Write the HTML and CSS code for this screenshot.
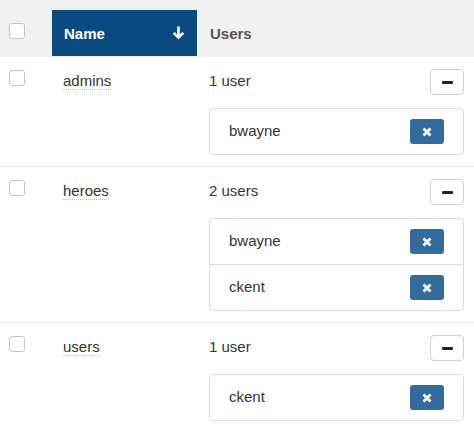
FILE: index.html
```html
<!DOCTYPE html>
<html>
<head>
<meta charset="utf-8">
<link rel="stylesheet" href="styles.css">
</head>
<body>
<div class="table">
  <div class="head">
    <div class="cell-check"><span class="checkbox"></span></div>
    <div class="th-name">
      <span>Name</span>
      <svg class="sort" width="13" height="14" viewBox="0 0 13 14"><path d="M6.5 13.5 L0.8 7.8 L2.6 6 L5.2 8.6 L5.2 0.5 L7.8 0.5 L7.8 8.6 L10.4 6 L12.2 7.8 Z" fill="#fff"/></svg>
    </div>
    <div class="th-users">Users</div>
  </div>

  <div class="row">
    <div class="cell-check"><span class="checkbox"></span></div>
    <div class="cell-name"><span class="editable">admins</span></div>
    <div class="cell-users">
      <div class="users-top">
        <span class="count">1 user</span>
        <button class="btn-collapse"><span class="minus"></span></button>
      </div>
      <ul class="list">
        <li class="item"><span>bwayne</span><button class="btn-del"><svg width="10" height="10" viewBox="0 0 10 10"><path d="M1.5 1.5 L8.5 8.5 M8.5 1.5 L1.5 8.5" stroke="#fff" stroke-width="2.8"/></svg></button></li>
      </ul>
    </div>
  </div>

  <div class="row">
    <div class="cell-check"><span class="checkbox"></span></div>
    <div class="cell-name"><span class="editable">heroes</span></div>
    <div class="cell-users">
      <div class="users-top">
        <span class="count">2 users</span>
        <button class="btn-collapse"><span class="minus"></span></button>
      </div>
      <ul class="list">
        <li class="item"><span>bwayne</span><button class="btn-del"><svg width="10" height="10" viewBox="0 0 10 10"><path d="M1.5 1.5 L8.5 8.5 M8.5 1.5 L1.5 8.5" stroke="#fff" stroke-width="2.8"/></svg></button></li>
        <li class="item"><span>ckent</span><button class="btn-del"><svg width="10" height="10" viewBox="0 0 10 10"><path d="M1.5 1.5 L8.5 8.5 M8.5 1.5 L1.5 8.5" stroke="#fff" stroke-width="2.8"/></svg></button></li>
      </ul>
    </div>
  </div>

  <div class="row">
    <div class="cell-check"><span class="checkbox"></span></div>
    <div class="cell-name"><span class="editable">users</span></div>
    <div class="cell-users">
      <div class="users-top">
        <span class="count">1 user</span>
        <button class="btn-collapse"><span class="minus"></span></button>
      </div>
      <ul class="list">
        <li class="item"><span>ckent</span><button class="btn-del"><svg width="10" height="10" viewBox="0 0 10 10"><path d="M1.5 1.5 L8.5 8.5 M8.5 1.5 L1.5 8.5" stroke="#fff" stroke-width="2.8"/></svg></button></li>
      </ul>
    </div>
  </div>
</div>
</body>
</html>
```

FILE: styles.css
```css
html, body {
  margin: 0;
  padding: 0;
  background: #fff;
}
body {
  font-family: "Liberation Sans", Arial, sans-serif;
  font-size: 15px;
  color: #333;
}
.table {
  width: 474px;
}
.head {
  display: grid;
  grid-template-columns: 52px 145px 1fr;
  height: 57px;
  background: #f0f0f0;
}
.head .cell-check {
  padding: 23px 0 0 9px;
}
.checkbox {
  display: block;
  width: 14px;
  height: 14px;
  border: 1px solid #c4c4c4;
  border-radius: 3px;
  background: #fff;
}
.th-name {
  margin-top: 10px;
  height: 46px;
  background: #0b4a80;
  color: #fff;
  font-weight: bold;
  display: flex;
  align-items: center;
  justify-content: space-between;
  padding: 0 12px;
}
.sort {
  display: block;
  margin-top: -1px;
}
.th-users {
  font-weight: bold;
  color: #555;
  display: flex;
  align-items: center;
  padding: 10px 0 0 13px;
  height: 46px;
}
.row {
  display: grid;
  grid-template-columns: 52px 145px 1fr;
  border-bottom: 1px solid #e8e8e8;
}
.row:last-child {
  border-bottom: none;
}
.row .cell-check {
  padding: 13px 0 0 9px;
}
.cell-name {
  padding: 12px 0 0 11px;
  line-height: 24px;
}
.editable {
  border-bottom: 1px dotted #c0c0c0;
}
.cell-users {
  padding: 12px 10px 11px 12px;
}
.users-top {
  display: flex;
  justify-content: space-between;
  align-items: flex-start;
  height: 26px;
}
.count {
  line-height: 24px;
}
.btn-collapse {
  width: 34px;
  height: 26px;
  padding: 0;
  border: 1px solid #cfcfcf;
  border-radius: 4px;
  background: #fff;
  display: flex;
  align-items: center;
  justify-content: center;
}
.minus {
  display: block;
  width: 11px;
  height: 3px;
  background: #222;
  border-radius: 1px;
}
.list {
  list-style: none;
  margin: 13px 0 0 0;
  padding: 0;
  border: 1px solid #dcdcdc;
  border-radius: 4px;
}
.item {
  height: 45px;
  display: flex;
  align-items: center;
  justify-content: space-between;
  padding: 0 19px 0 19px;
  border-top: 1px solid #dcdcdc;
}
.item:first-child {
  border-top: none;
}
.item span {
  margin-top: -3px;
}
.btn-del {
  width: 34px;
  height: 25px;
  padding: 0;
  border: none;
  border-radius: 3px;
  background: #326b9c;
  display: flex;
  align-items: center;
  justify-content: center;
}
.btn-del svg {
  display: block;
}
```
